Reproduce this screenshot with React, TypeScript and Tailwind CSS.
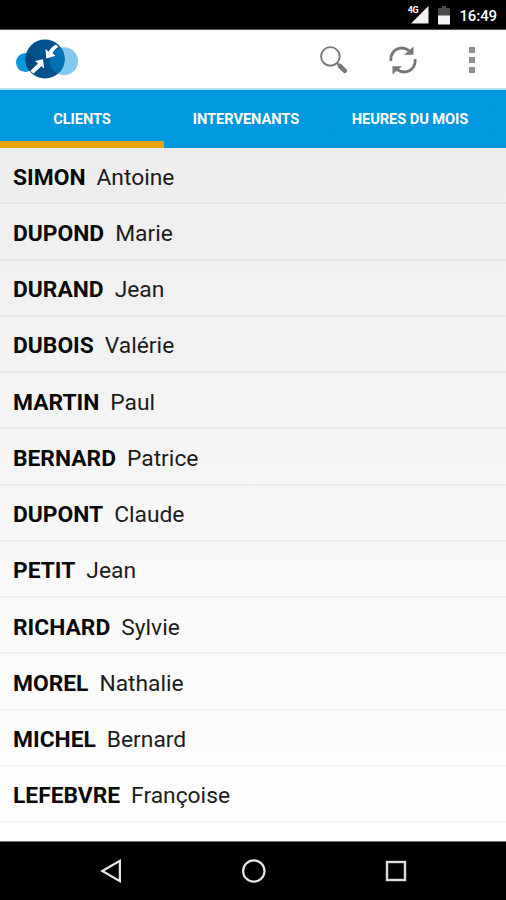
import React from "react";

const clients = [
  { last: "SIMON", first: "Antoine" },
  { last: "DUPOND", first: "Marie" },
  { last: "DURAND", first: "Jean" },
  { last: "DUBOIS", first: "Valérie" },
  { last: "MARTIN", first: "Paul" },
  { last: "BERNARD", first: "Patrice" },
  { last: "DUPONT", first: "Claude" },
  { last: "PETIT", first: "Jean" },
  { last: "RICHARD", first: "Sylvie" },
  { last: "MOREL", first: "Nathalie" },
  { last: "MICHEL", first: "Bernard" },
  { last: "LEFEBVRE", first: "Françoise" },
];

function StatusBar() {
  return (
    <div className="flex h-[30px] shrink-0 items-center justify-end border-b border-[#555] bg-black pt-px pr-[9px] text-white">
      <span className="mb-[9px] text-[9px] leading-none font-bold tracking-[-0.3px]">4G</span>
      <svg className="-ml-[7px]" width="18" height="18" viewBox="0 0 18 18">
        <path d="M0 17.5 17.5 0v17.5z" fill="#f2f2f2" />
      </svg>
      <svg className="ml-[9px]" width="12" height="19" viewBox="0 0 12 19">
        <path d="M4 0h4v2h4v8H0V2h4z" fill="#4a4a4a" />
        <path d="M0 9.500h12V18.500H0z" fill="#f4f4f4" />
      </svg>
      <span className="ml-[9px] pt-[2px] text-[15px] leading-none font-medium tracking-[-0.1px]">16:49</span>
    </div>
  );
}

function Logo() {
  return (
    <svg width="64" height="42" viewBox="0 0 64 42">
      <defs>
        <clipPath id="disc">
          <circle cx="30" cy="21" r="19.600" />
        </clipPath>
      </defs>
      <circle cx="10.500" cy="24.500" r="9.500" fill="#0897dc" />
      <circle cx="49" cy="23.200" r="14" fill="#83c8ef" />
      <circle cx="30" cy="21" r="19.600" fill="#00528e" />
      <g clipPath="url(#disc)">
        <circle cx="10.500" cy="24.500" r="9.500" fill="#00477f" />
        <circle cx="49" cy="23.200" r="14" fill="#0071b4" />
      </g>
      <path d="M28 21.300 29.200 30.500 26.300 28.300 18.500 35.500 15.300 33 23 25.600 20 23z" fill="#fff" />
      <path d="M31.200 20.500 30.500 11 33.700 13.400Q36.500 8.500 41 6.500L43.500 9Q39 11.500 37.500 15.500L40.500 17.800z" fill="#fff" />
    </svg>
  );
}

function SearchIcon() {
  return (
    <svg width="28" height="28" viewBox="0 0 28 28" fill="none" stroke="#777">
      <circle cx="10.400" cy="10.400" r="9.300" strokeWidth="1.900" />
      <path d="m17 17 3 3" strokeWidth="2" />
      <path d="m19.800 19.800 5 5" strokeWidth="4.500" strokeLinecap="round" />
    </svg>
  );
}

function RefreshIcon() {
  return (
    <svg width="28" height="28" viewBox="0 0 28 28">
      <g fill="none" stroke="#777" strokeWidth="2.800">
        <path d="M1.900 15C1 4.500 11 -1.500 20 4.500" />
        <path d="M26.100 13C27 23.500 17 29.500 8 23.500" />
      </g>
      <path d="M24.500 .5V8.800H15z" fill="#777" />
      <path d="M3.500 28.500v-8.300H13z" fill="#777" />
    </svg>
  );
}

function ActionBar() {
  return (
    <header className="flex h-[60px] shrink-0 items-center border-b-2 border-[#b9def5] bg-white pl-[15px]">
      <Logo />
      <div className="ml-auto flex items-center pt-px pr-[31px]">
        <SearchIcon />
        <div className="ml-[41px]">
          <RefreshIcon />
        </div>
        <div className="ml-[52px] flex flex-col gap-1">
          <span className="h-[6px] w-[6px] bg-[#919191]" />
          <span className="h-[6px] w-[6px] bg-[#919191]" />
          <span className="h-[6px] w-[6px] bg-[#919191]" />
        </div>
      </div>
    </header>
  );
}

function Tabs() {
  return (
    <nav className="flex h-[58px] shrink-0 bg-[#0099e0] text-[14.700px] font-bold tracking-[-0.100px] text-white">
      <div className="flex w-[164px] items-center justify-center border-b-[7px] border-[#e5a411] pt-[8px]">
        <span>CLIENTS</span>
      </div>
      <div className="flex w-[164px] items-center justify-center pt-px">
        <span>INTERVENANTS</span>
      </div>
      <div className="my-[15px] w-px bg-[#0c92d4]" />
      <div className="flex w-[162px] items-center justify-center pt-px">
        <span>HEURES DU MOIS</span>
      </div>
      <div className="my-[15px] w-px bg-[#0c92d4]" />
    </nav>
  );
}

function NavigationBar() {
  return (
    <footer className="flex h-[59px] shrink-0 items-center border-t border-[#777] bg-black pl-[99px]">
      <svg width="25" height="26" viewBox="0 0 25 26" fill="none" stroke="#e8e8e8" strokeWidth="2.200">
        <path d="M3.300 13 20.900 2.800v20.400z" />
      </svg>
      <svg className="ml-[117px]" width="26" height="26" viewBox="0 0 26 26" fill="none" stroke="#e8e8e8" strokeWidth="2.200">
        <circle cx="12.800" cy="13" r="10.700" />
      </svg>
      <svg className="ml-[116px]" width="26" height="26" viewBox="0 0 26 26" fill="none" stroke="#dedede" strokeWidth="2.400">
        <rect x="4" y="4" width="18" height="18" />
      </svg>
    </footer>
  );
}

export default function App() {
  return (
    <div className="flex h-[900px] w-[506px] flex-col overflow-hidden bg-white font-['Roboto',sans-serif]">
      <StatusBar />
      <ActionBar />
      <Tabs />
      <main className="min-h-0 flex-1 overflow-hidden bg-linear-to-b from-[#ededed] to-white">
        <ul>
          {clients.map((client) => (
            <li
              key={client.last}
              className="flex h-[56.270px] items-center gap-[11px] border-b-2 border-black/4 pt-[5px] pl-[13px] text-[22.800px] text-[#080808]"
            >
              <span className="font-bold">{client.last}</span>
              <span className="text-[#1c1c1c]">{client.first}</span>
            </li>
          ))}
        </ul>
      </main>
      <NavigationBar />
    </div>
  );
}
